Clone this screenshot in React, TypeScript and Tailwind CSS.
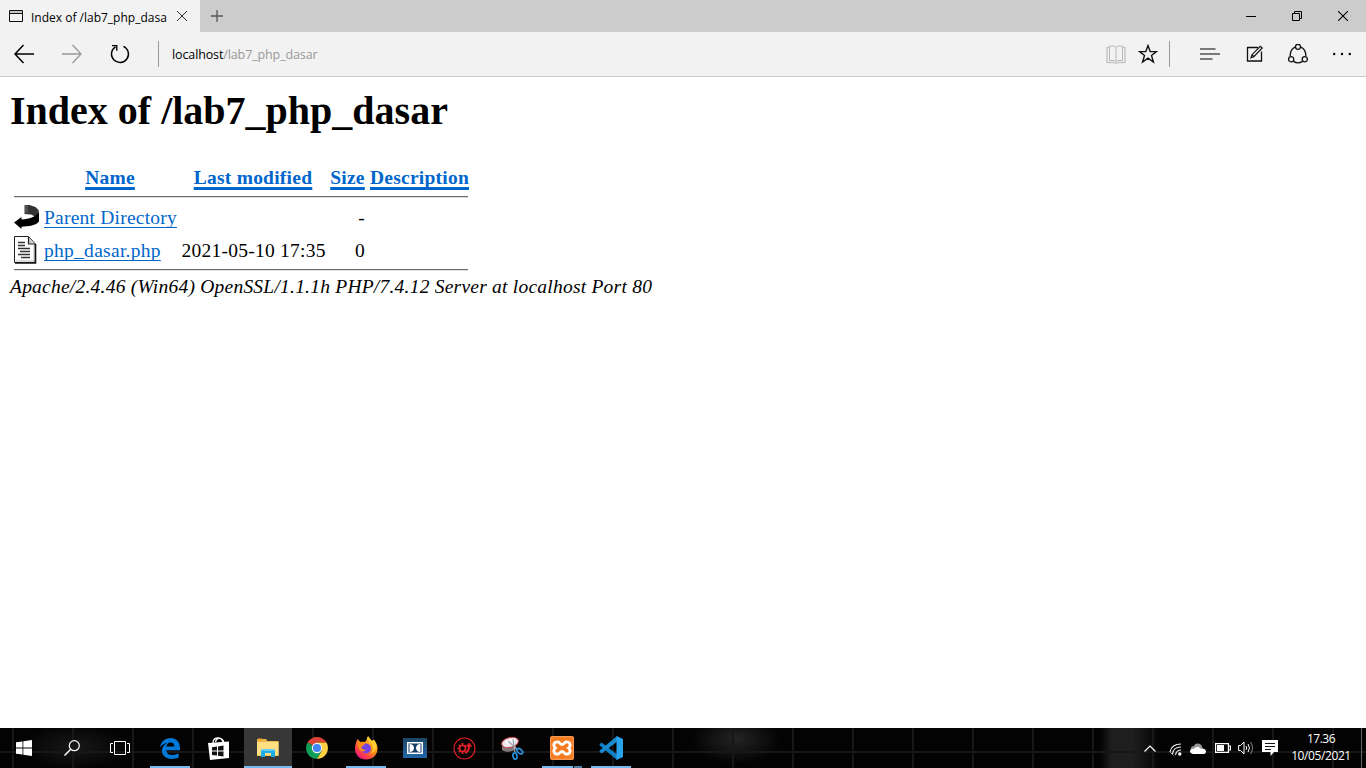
import type { ReactNode } from "react";

const serif = "font-['Liberation_Serif',serif]";
const ui = "font-['Open_Sans',sans-serif]";

function HeadLink({ children }: { children: string }) {
  return (
    <a className="whitespace-nowrap font-bold text-[19.500px] tracking-[0.240px] text-[#0066cc] underline decoration-[3px] underline-offset-[3px] [text-decoration-skip-ink:none]">
      {children}
    </a>
  );
}

function FileLink({ children }: { children: string }) {
  return (
    <a className="whitespace-nowrap text-[#0066cc] underline decoration-1 underline-offset-[3px] [text-decoration-skip-ink:none]">
      {children}
    </a>
  );
}

const cols = "grid grid-cols-[26px_133px_144px_35px_98px] pl-[4px]";

function Rule() {
  return <div className="ml-[4px] h-[2px] w-[454px] border-t border-[#6b6b6b] border-b border-b-[#dedede]" />;
}

function BackIcon() {
  return (
    <svg width="26" height="26" viewBox="0 0 26 26">
      <path d="M10.500 1h5l6 2 3 3 .5 4-4 2.500-4-2-6.500-.5z" fill="#333" />
      <path d="M10.500 2h4M10.500 4h4M10.500 6h4M10.500 8h3" stroke="#aaa" strokeWidth="1" strokeDasharray="1 1" />
      <path d="M0 18.500L7.500 13v2.500c8-.5 14-3 17-6.500h.5v8.500c-3 4-10 5-17.500 5.200V25z" fill="#000" />
    </svg>
  );
}

function TextFileIcon() {
  return (
    <svg width="24" height="28" viewBox="0 0 24 28">
      <path d="M.5.500H14.500L21 7.500V26.500H.5z" fill="#fff" stroke="#222" />
      <path d="M1 27h20.500V8" fill="none" stroke="#111" strokeWidth="1.600" />
      <path d="M20 9v16H2" fill="none" stroke="#bbb" />
      <path d="M14.500 1v7H21" fill="#ccc" stroke="#222" strokeWidth="1.200" />
      <path d="M4 6.500h7M4 9.500h7M4 12.500h12M6 15.500h10M4 18.500h12M7 21.500h9" stroke="#333" strokeWidth="1.400" />
    </svg>
  );
}

function Titlebar() {
  return (
    <div className="flex h-8 bg-[#cccccc]">
      <div className="flex h-8 w-[200px] items-center bg-[#f2f2f2] pl-[9px]">
        <svg width="14" height="12" viewBox="0 0 14 12" className="-mt-[1px]">
          <path d="M.5.5h13v11H.5zM.5 3.500h13" fill="none" stroke="#111" />
          <path d="M1 2h12" stroke="#999" />
        </svg>
        <div className={`${ui} ml-2 mt-[3px] w-[138px] whitespace-nowrap text-[12px] text-black`}>Index of /lab7_php_dasa</div>
        <svg width="10" height="10" viewBox="0 0 10 10" className="ml-[8px]">
          <path d="M0 0L10 10M10 0L0 10" stroke="#333" />
        </svg>
      </div>
      <div className="flex flex-1 items-center justify-between pl-[11px] pr-[18px]">
        <svg width="12" height="12" viewBox="0 0 12 12">
          <path d="M6 0v12M0 6h12" stroke="#555" strokeWidth="1.300" />
        </svg>
        <div className="flex items-center gap-[36px]">
          <svg width="10" height="10" viewBox="0 0 10 10"><path d="M0 5.500h10" stroke="#000" /></svg>
          <svg width="10" height="10" viewBox="0 0 10 10"><path d="M.5 2.500h7v7h-7zM2.500 2.500v-2h7v7h-2" fill="none" stroke="#000" /></svg>
          <svg width="10" height="10" viewBox="0 0 10 10"><path d="M0 0L10 10M10 0L0 10" stroke="#000" strokeWidth="1.100" /></svg>
        </div>
      </div>
    </div>
  );
}

function Toolbar() {
  return (
    <div className="flex h-[45px] items-center border-b border-[#cccccc] bg-[#f2f2f2] pl-[14px] pr-[15px]">
      <svg width="20" height="20" viewBox="0 0 20 20"><path d="M20 10H1M9.500 1L1 10l8.500 9" fill="none" stroke="#000" strokeWidth="1.500" /></svg>
      <svg width="20" height="20" viewBox="0 0 20 20" className="ml-[28px]"><path d="M0 10h19M10.500 1L19 10l-8.500 9" fill="none" stroke="#999" strokeWidth="1.300" /></svg>
      <svg width="20" height="20" viewBox="0 0 20 20" className="ml-[28px]">
        <path d="M13.500 2.300A8.500 8.500 0 1 1 5.500 2.800" fill="none" stroke="#000" strokeWidth="1.400" />
        <path d="M2 1.600h4.800v5.200" fill="none" stroke="#000" strokeWidth="1.300" />
      </svg>
      <div className="ml-[28px] h-[26px] w-px bg-[#999]" />
      <div className={`${ui} ml-[13px] mt-[2px] flex-1 whitespace-nowrap text-[12.500px] tracking-[-0.120px] text-[#999]`}>
        <span className="text-black">localhost</span>/lab7_php_dasar
      </div>
      <svg width="20" height="19" viewBox="0 0 20 19">
        <path d="M3 2.500H1v15h7.500l1.500 1 1.500-1H19v-15h-2" fill="none" stroke="#c8c8c8" strokeWidth="1.500" />
        <path d="M10 2.500L8.500 1h-5v14.500h5l1.500 1 1.500-1h5V1h-5L10 2.500v13" fill="none" stroke="#b8b8b8" />
      </svg>
      <svg width="20" height="20" viewBox="0 0 20 20" className="ml-[12px]">
        <path d="M10 1.600l2.200 6h6.200l-4.900 3.900 1.900 6.500L10 14.200 4.600 18l1.900-6.500L1.600 7.600h6.200z" fill="none" stroke="#111" strokeWidth="1.400" />
      </svg>
      <div className="ml-[11px] h-[26px] w-px bg-[#999]" />
      <svg width="20" height="13" viewBox="0 0 20 13" className="ml-[30px]"><path d="M0 1h15.500M0 6h20M0 11h12.500" stroke="#000" strokeWidth="1.200" /></svg>
      <svg width="18" height="18" viewBox="0 0 18 18" className="ml-[26px]">
        <path d="M12 2.500H1.500v13.500h14V6.500" fill="none" stroke="#111" strokeWidth="1.300" />
        <path d="M5 12.700l1-3L14.300 1.300l1.900 1.700-8.400 8.700zM6 9.700l1.800 2" fill="none" stroke="#111" strokeWidth="1.200" />
      </svg>
      <svg width="20" height="20" viewBox="0 0 20 20" className="ml-[24px]">
        <g fill="none" stroke="#111" strokeWidth="1.300">
          <path d="M7 3.200C4 4.500 2.200 7.500 2.200 12M13 3.200c3 1.300 4.800 4.300 4.800 8.800M5.500 17.400c2.600 1.800 6.400 1.800 9 0" />
          <circle cx="10" cy="2.800" r="2.500" /><circle cx="3.200" cy="15.300" r="2.600" /><circle cx="16.800" cy="15.300" r="2.600" />
        </g>
      </svg>
      <svg width="18" height="4" viewBox="0 0 18 4" className="ml-[25px]"><circle cx="1.200" cy="2" r="1.200" /><circle cx="9" cy="2" r="1.200" /><circle cx="16.800" cy="2" r="1.200" /></svg>
    </div>
  );
}

function Task({ children, open, active, more }: { children: ReactNode; open?: boolean; active?: boolean; more?: boolean }) {
  return (
    <div className={`mr-px flex h-10 w-12 flex-col items-center ${active ? "bg-[#373737]" : ""}`}>
      <div className="flex h-[38px] items-center pt-[2px]">{children}</div>
      <div className={`flex h-[2px] justify-end ${active ? "w-12" : "w-10"} ${open || active ? "bg-[#76b9ed]" : ""}`}>
        {more && <div className="h-[2px] w-[9px] border-l border-black bg-[#527fa5]" />}
      </div>
    </div>
  );
}

function Taskbar() {
  return (
    <div className="flex h-10 w-full bg-[#030303] bg-[linear-gradient(90deg,transparent_12px,#171717_12px,#171717_14px,transparent_14px),linear-gradient(180deg,transparent_23px,#171717_23px,#171717_25px,transparent_25px),radial-gradient(ellipse_at_center,#242424_0%,transparent_70%),radial-gradient(ellipse_at_center,#181818_0%,transparent_70%),linear-gradient(90deg,transparent,#1e1e1e_12px,#1e1e1e_32px,transparent_60px)] bg-[length:60px_40px,100%_40px,90px_50px,110px_46px,75px_40px] bg-[position:0_0,0_0,691px_-14px,20px_-4px,1100px_0] [background-repeat:repeat-x,no-repeat,no-repeat,no-repeat,no-repeat]">
      <div className="flex w-12 items-center justify-center">
        <svg width="16" height="16" viewBox="0 0 16 16"><path d="M0 2.300l6.500-.9v6.100H0zM7.300 1.300L16 0v7.500H7.300zM0 8.400h6.500v6.200L0 13.700zM7.300 8.400H16V16l-8.700-1.200z" fill="#fff" /></svg>
      </div>
      <div className="flex w-12 items-center justify-center">
        <svg width="16" height="16" viewBox="0 0 16 16"><circle cx="10.300" cy="5.700" r="5" fill="none" stroke="#fff" strokeWidth="1.200" /><path d="M6.700 9.300L.5 15.500" stroke="#fff" strokeWidth="1.500" /></svg>
      </div>
      <div className="mr-[2px] flex w-12 items-center justify-center">
        <svg width="20" height="14" viewBox="0 0 20 14"><path d="M4.500.5h11v13h-11zM3 2.500H.5v9H3M17 2.500h2.500v9H17" fill="none" stroke="#fff" /></svg>
      </div>
      <Task open>
        <svg width="20" height="21" viewBox="0 0 20 21">
          <path d="M0 9.600C.8 3.500 5 0 10.500 0 16.500 0 20 4.300 20 10v2.300H6.300c.2 3.200 2.700 4.800 5.900 4.800 2.500 0 4.400-.6 6.500-1.800v4.300c-2.300 1-4.500 1.400-7.200 1.400C5.700 21 2 17.700 2 12.600 2 9.300 3.800 6.600 7 5 4.200 5.300 1.600 7 0 9.600zM6.400 8.500h7.900c0-2.500-1.300-4.100-3.700-4.100-2.400 0-4 1.700-4.200 4.100z" fill="#0078d7" />
        </svg>
      </Task>
      <Task>
        <svg width="22" height="24" viewBox="0 0 22 24">
          <path d="M5 7C5 1 13 0 15 6M7.500 6C8.500 1 15 1 16 7" fill="none" stroke="#fff" strokeWidth="1.300" />
          <path d="M0 7l21-1.500V22L2 24z" fill="#fff" />
          <path d="M4 11.200l5-.7v4H4zM10 10.400l5.500-.8v4.900H10zM4 15.500h5v4l-5-.6zM10 15.500h5.500v5l-5.500-.8z" fill="#111" />
        </svg>
      </Task>
      <Task active>
        <svg width="22" height="20" viewBox="0 0 22 20">
          <path d="M0 1h9l1.500 2H21.500v15H0z" fill="#e8b84b" />
          <path d="M0 4h21.500v13.500H0z" fill="#ffdf82" /><path d="M1 1.500h4" stroke="#f4a51c" strokeWidth="2" />
          <path d="M4 19v-8h14v8h-4v-4H8v4z" fill="#1cabe3" /><path d="M4 11h14v2H4z" fill="#64cff2" />
        </svg>
      </Task>
      <Task>
        <svg width="22" height="22" viewBox="0 0 22 22">
          <path d="M11 11L1.500 5.500A11 11 0 0 1 20.500 5.500H11z" fill="#db4437" />
          <path d="M11 11L1.500 5.500A11 11 0 0 0 11 22l4.800-8.200z" fill="#109d58" />
          <path d="M11 5.500h9.500A11 11 0 0 1 11 22l4.800-8.300z" fill="#ffcd40" />
          <circle cx="11" cy="11" r="5.200" fill="#f5f5f5" /><circle cx="11" cy="11" r="4.100" fill="#4285f4" />
        </svg>
      </Task>
      <Task open>
        <svg width="24" height="24" viewBox="0 0 24 24">
          <defs>
            <linearGradient id="fox" x1="1" y1="0" x2=".2" y2="1"><stop stopColor="#fff44f" /><stop offset=".45" stopColor="#ff980e" /><stop offset=".8" stopColor="#ff3750" /><stop offset="1" stopColor="#e31587" /></linearGradient>
          </defs>
          <path d="M3.500 3l2.500 3c1.500-.5 3-.5 4.500 0L12 5l2-5 4 5 1.500-1.500C22 6 23.500 9 23.500 12.500c0 6.500-5 11-11.500 11S1 19 1 12.500c0-3 .8-6 2.500-9.500z" fill="url(#fox)" />
          <circle cx="12" cy="12.500" r="5" fill="#7542e5" />
          <path d="M4 4l3 3 4 .5-2 2.500-2 1 1 2 4 1c-3 3-8 1-8-5z" fill="#ff8a16" />
          <path d="M13 1c0 4 6 5 6 11 0 3-1.500 5-3 6 6-2 8-9 4-14l-1 2z" fill="#ffce32" />
        </svg>
      </Task>
      <Task>
        <svg width="24" height="20" viewBox="0 0 24 20">
          <defs><linearGradient id="dolby" x2="0" y2="1"><stop stopColor="#1d4763" /><stop offset="1" stopColor="#2166a8" /></linearGradient></defs>
          <path d="M0 0h24v20H0z" fill="url(#dolby)" /><path d="M4 4h16v12H4z" fill="#fff" /><path d="M5.500 5.500h13v9h-13z" fill="#153f66" />
          <path d="M6.500 6c6 0 6 8 0 8zM17.500 6c-6 0-6 8 0 8z" fill="#fff" />
        </svg>
      </Task>
      <Task>
        <svg width="23" height="23" viewBox="0 0 23 23" fill="none" stroke="#df2027">
          <circle cx="11.500" cy="11.500" r="10.500" strokeWidth="1.100" />
          <circle cx="9.500" cy="11.500" r="3" strokeWidth="1.700" />
          <path d="M9.500 6v2M9.500 15v2M4.500 11.500h2M5.900 7.900L7.300 9.300M5.900 15.100l1.400-1.400M13 8l-1.300 1.300" strokeWidth="1.800" />
          <path d="M16 6l3 3.500h-6z" fill="#df2027" strokeWidth=".5" /><path d="M16 9c.3 3-1 5.500-4 7" strokeWidth="2" />
        </svg>
      </Task>
      <Task>
        <svg width="23" height="24" viewBox="0 0 23 24" className="-ml-px">
          <path d="M1 9v5c4 3 10 2 14-1V8z" fill="#85787c" />
          <ellipse cx="9" cy="6.500" rx="8.500" ry="5" transform="rotate(-14 9 6.500)" fill="#eee8ee" stroke="#c83a48" />
          <path d="M5 7l5-3 4 0" fill="none" stroke="#fff" strokeWidth="2.500" />
          <path d="M7 5l10 9M12 3l2 14" stroke="#9da5ae" strokeWidth="1.300" />
          <ellipse cx="18.800" cy="15.300" rx="3.300" ry="2" transform="rotate(40 18.800 15.300)" fill="none" stroke="#278bd5" strokeWidth="1.800" />
          <ellipse cx="14" cy="20" rx="2" ry="3.200" transform="rotate(-10 14 20)" fill="none" stroke="#278bd5" strokeWidth="1.800" />
        </svg>
      </Task>
      <Task open more>
        <svg width="24" height="24" viewBox="0 0 24 24">
          <rect width="24" height="24" rx="2" fill="#f47b20" /><rect x=".7" y=".7" width="22.600" height="22.600" rx="2" fill="none" stroke="#f7a15e" />
          <path d="M8 6c-4-.5-5.500 3.500-2.500 6C2.500 14.500 4 18.500 8 18c2-.3 2-2.500 4-2.500s2 2.200 4 2.500c4 .5 5.500-3.500 2.500-6C21.500 9.500 20 5.500 16 6c-2 .3-2 2.500-4 2.500S10 6.300 8 6z" fill="none" stroke="#fff" strokeWidth="2.800" />
        </svg>
      </Task>
      <Task open>
        <svg width="24" height="24" viewBox="0 0 24 24">
          <path d="M.5 8.500l2-2L18 18.200V24L1 9.800z" fill="#0f7fc8" /><path d="M.5 15.500l2 2L18 5.800V0L1 14.200z" fill="#1a8ad0" />
          <path d="M17.500 0L24 3v18l-6.500 3z" fill="#29a3ec" />
        </svg>
      </Task>
      <div className="flex-1" />
      <div className="flex items-center">
        <svg width="12" height="7" viewBox="0 0 12 7"><path d="M.5 6.500L6 1l5.500 5.500" fill="none" stroke="#fff" strokeWidth="1.200" /></svg>
        <svg width="13" height="13" viewBox="0 0 13 13" className="ml-[13px] mt-[2px]">
          <path d="M1 9C2 4 6 1 12 1M3.500 11C4 7 7 4 12 4M6.500 12c.5-3 2.500-5 5.500-5" fill="none" stroke="#eee" strokeWidth="1.200" /><path d="M.5 8.500l4 4" stroke="#999" />
          <circle cx="10.800" cy="11" r="1.700" fill="#fff" />
        </svg>
        <svg width="16" height="11" viewBox="0 0 16 11" className="ml-[8px]">
          <path d="M1 7C0 5 2 3 4 3c1-4 8-3 8 1l2 3z" fill="#999" /><path d="M3 11c-5-1-3-6 1-5 2-3 6-2 7 0 6-2 6 5 3 5z" fill="#fff" />
        </svg>
        <svg width="16" height="10" viewBox="0 0 16 10" className="ml-[9px]"><path d="M.6.6h12.800v8.800H.6zM14 3h1.400v4H14" fill="none" stroke="#fff" strokeWidth="1.200" /><path d="M2 2h7v6H2z" fill="#fff" /></svg>
        <svg width="16" height="14" viewBox="0 0 16 14" className="ml-[7px]">
          <path d="M.6 4.500h2L6 1v12L2.600 9.500h-2zM8 5q1.500 2 0 4M10 3q3 4 0 8" fill="none" stroke="#fff" /><path d="M12.500 1q4 6 0 12" fill="none" stroke="#888" />
        </svg>
        <svg width="16" height="16" viewBox="0 0 16 16" className="ml-[8px]"><path d="M0 0h16v12h-4l-3.500 4v-4H0z" fill="#fff" /><path d="M3 3.500h10M3 6.500h10M3 9.500h6" stroke="#111" /></svg>
      </div>
      <div className={`${ui} ml-[8px] flex w-[70px] flex-col items-center pt-[2px] text-[12px] leading-[17px] tracking-[-0.400px] text-white`}>
        <div className="tracking-[-0.500px]">17.36</div>
        <div>10/05/2021</div>
      </div>
      <div className="ml-[5px] mr-[4px] w-px bg-[#666]" />
    </div>
  );
}

export default function App() {
  return (
    <div className="flex h-[768px] w-[1366px] flex-col overflow-hidden bg-white">
      <Titlebar />
      <Toolbar />
      <main className={`${serif} flex-1 pl-[10px] text-[19.500px] tracking-[0.220px] leading-[22px] text-black`}>
        <h1 className="pt-[11px] text-[40px] tracking-normal leading-[46px] font-bold whitespace-nowrap">Index of /lab7_php_dasar</h1>
        <div className="mt-[33px] grid grid-cols-[26px_132px_144px_35px_98px] gap-x-[5px] pl-[3px]">
          <span />
          <div className="flex justify-center"><HeadLink>Name</HeadLink></div>
          <div className="flex justify-center"><HeadLink>Last modified</HeadLink></div>
          <div className="flex justify-center"><HeadLink>Size</HeadLink></div>
          <div className="flex justify-center pl-px"><HeadLink>Description</HeadLink></div>
        </div>
        <div className="pt-[7px]"><Rule /></div>
        <div className={`${cols} mt-[6px] h-[26px] items-center gap-x-[4px]`}>
          <BackIcon />
          <div className="pt-[2px]"><FileLink>Parent Directory</FileLink></div>
          <span />
          <span className="-mr-px pt-[2px] text-right">-</span>
        </div>
        <div className={`${cols} mt-[6px] h-[28px] items-center gap-x-[4px]`}>
          <TextFileIcon />
          <div className="pt-[2px] tracking-[0.280px]"><FileLink>php_dasar.php</FileLink></div>
          <span className="whitespace-nowrap pl-[0.500px] pt-[2px] tracking-[0.240px]">2021-05-10 17:35</span>
          <span className="-mr-px pt-[2px] text-right">0</span>
        </div>
        <div className="pt-[5px]"><Rule /></div>
        <address className="mt-[5px] whitespace-nowrap tracking-[0.228px] italic">Apache/2.4.46 (Win64) OpenSSL/1.1.1h PHP/7.4.12 Server at localhost Port 80</address>
      </main>
      <Taskbar />
    </div>
  );
}
